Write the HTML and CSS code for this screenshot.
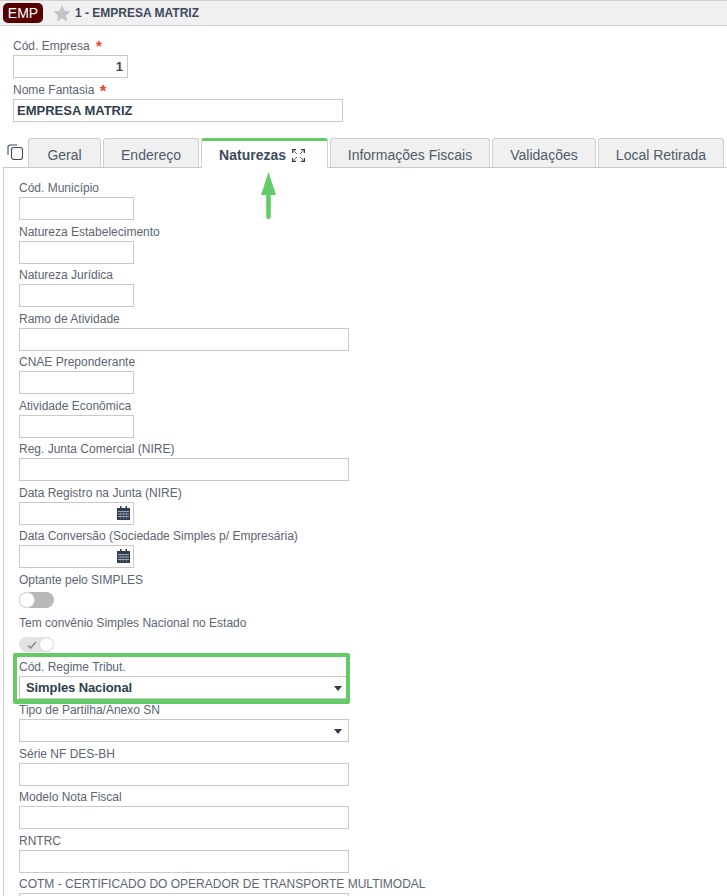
FILE: index.html
```html
<!DOCTYPE html>
<html lang="pt">
<head>
<meta charset="utf-8">
<title>Empresa</title>
<link rel="stylesheet" href="styles.css">
</head>
<body>
<header class="topbar">
  <span class="badge">EMP</span>
  <svg class="star" width="18" height="17" viewBox="0 0 20 18.500"><path d="M10 0l2.700 6.300 6.800.6-5.100 4.500 1.500 6.700L10 14.600l-5.900 3.500 1.500-6.700L.5 6.900l6.800-.6z" fill="#c4c4c8"/></svg>
  <span class="title">1 - EMPRESA MATRIZ</span>
</header>
<section class="head-form">
  <div class="field"><label class="lbl">Cód. Empresa <span class="req">*</span></label><div class="inp w115 num">1</div></div>
  <div class="field"><label class="lbl">Nome Fantasia <span class="req big">*</span></label><div class="inp w330 val">EMPRESA MATRIZ</div></div>
</section>
<nav class="tabs">
  <svg class="copy" width="16" height="16" viewBox="0 0 16 16" fill="none" stroke="#3d4a5c" stroke-width="1.100"><path d="M1 11V3a2 2 0 0 1 2-2h7"/><rect x="4.500" y="3.500" width="11" height="12" rx="2.500"/></svg>
  <a class="tab t1">Geral</a>
  <a class="tab t2">Endereço</a>
  <a class="tab active">Naturezas
    <svg class="expand" width="13" height="13" viewBox="0 0 13 13" fill="none" stroke="#2e3c50" stroke-width="1.300"><path d="M.6 4V.6h3.400M9 .6h3.400V4M12.400 9v3.400H9M4 12.400H.6V9"/><path class="expand-diag" d="M1.500 1.500l3.500 3.500M11.500 1.500L8 5M11.500 11.500L8 8M1.500 11.500L5 8"/></svg>
  </a>
  <a class="tab t4">Informações Fiscais</a>
  <a class="tab t5">Validações</a>
  <a class="tab t6">Local Retirada</a>
</nav>
<main class="panel">
  <svg class="arrow" width="15" height="47" viewBox="0 0 15 47"><path d="M7.500 0L15 23H9.800V44.700a2.300 2.300 0 0 1-4.600 0V23H0z" fill="#63cb66"/></svg>
  <div class="field"><label class="lbl">Cód. Município</label><div class="inp w115"></div></div>
  <div class="field"><label class="lbl">Natureza Estabelecimento</label><div class="inp w115"></div></div>
  <div class="field"><label class="lbl">Natureza Jurídica</label><div class="inp w115"></div></div>
  <div class="field"><label class="lbl">Ramo de Atividade</label><div class="inp w330"></div></div>
  <div class="field"><label class="lbl">CNAE Preponderante</label><div class="inp w115"></div></div>
  <div class="field"><label class="lbl">Atividade Econômica</label><div class="inp w115"></div></div>
  <div class="field"><label class="lbl">Reg. Junta Comercial (NIRE)</label><div class="inp w330"></div></div>
  <div class="field"><label class="lbl">Data Registro na Junta (NIRE)</label><div class="inp w115 date"><svg class="cal" width="13" height="14" viewBox="0 0 13 14"><path d="M3 0h1.500v2H8.500V0H10v2h3v12H0V2h3z" fill="#2f3d50"/><path d="M1 5.500h11M1 8h11M1 10.500h11" stroke="#c2c7cd" stroke-width=".8"/><path d="M3.500 5v8M6.500 5v8M9.500 5v8" stroke="#7f8994" stroke-width=".6"/></svg></div></div>
  <div class="field"><label class="lbl">Data Conversão (Sociedade Simples p/ Empresária)</label><div class="inp w115 date"><svg class="cal" width="13" height="14" viewBox="0 0 13 14"><path d="M3 0h1.500v2H8.500V0H10v2h3v12H0V2h3z" fill="#2f3d50"/><path d="M1 5.500h11M1 8h11M1 10.500h11" stroke="#c2c7cd" stroke-width=".8"/><path d="M3.500 5v8M6.500 5v8M9.500 5v8" stroke="#7f8994" stroke-width=".6"/></svg></div></div>
  <div class="field"><label class="lbl">Optante pelo SIMPLES</label><div class="toggle off"><span class="knob"></span></div></div>
  <div class="field"><label class="lbl">Tem convênio Simples Nacional no Estado</label><div class="toggle on"><svg class="check" width="10" height="8" viewBox="0 0 10 8" fill="none" stroke="#8b8b8b" stroke-width="1.600"><path d="M1 4.500l2.500 2.500L9 1"/></svg><span class="knob"></span></div></div>
  <div class="field"><label class="lbl">Cód. Regime Tribut.</label><div class="inp w330 val2">Simples Nacional<span class="caret"></span></div><span class="highlight"></span></div>
  <div class="field"><label class="lbl">Tipo de Partilha/Anexo SN</label><div class="inp w330"><span class="caret"></span></div></div>
  <div class="field"><label class="lbl">Série NF DES-BH</label><div class="inp w330"></div></div>
  <div class="field"><label class="lbl">Modelo Nota Fiscal</label><div class="inp w330"></div></div>
  <div class="field"><label class="lbl">RNTRC</label><div class="inp w330"></div></div>
  <div class="field"><label class="lbl">COTM - CERTIFICADO DO OPERADOR DE TRANSPORTE MULTIMODAL</label><div class="inp w330"></div></div>
</main>
</body>
</html>
```
FILE: styles.css
```css
* { box-sizing: border-box; }
html, body { margin: 0; padding: 0; height: 896px; overflow: hidden; background: #fff; }
body { font-family: "Liberation Sans", Arial, sans-serif; font-size: 12px; color: #5b6573; }
.topbar { height: 26px; background: #f0f0f0; border-top: 1px solid #d0d0d0; border-bottom: 1px solid #d0d0d0; display: flex; align-items: center; padding-left: 3px; }
.badge { width: 40px; height: 20px; background: #560000; color: #fff; border-radius: 5px; font-size: 14px; line-height: 20px; text-align: center; }
.star { margin-left: 10px; }
.title { margin-left: 4px; font-size: 12px; font-weight: bold; color: #3d4a5c; }
.head-form { padding: 13px 0 0 13px; height: 112px; }
.field { height: 43.500px; position: relative; }
.lbl { display: block; height: 16px; line-height: 14px; font-size: 12px; color: #5b6573; }
.req { color: #e8402f; font-size: 15px; font-weight: bold; margin-left: 3px; line-height: 10px; vertical-align: -1px; }
.req.big { font-size: 17px; margin-left: 2px; vertical-align: -3px; }
.inp { height: 23px; border: 1px solid #c9c9c9; background: #fff; position: relative; }
.w115 { width: 115px; }
.w330 { width: 330px; }
.num { text-align: right; padding-right: 4px; font-weight: bold; line-height: 21px; color: #3d4a5c; font-size: 13px; }
.val { padding-left: 3px; font-weight: bold; font-size: 13px; line-height: 21px; color: #2f3d50; }
.val2 { padding-left: 6px; font-weight: bold; font-size: 13px; letter-spacing: -.1px; line-height: 21px; color: #2f3d50; }
.tabs { height: 30px; display: flex; gap: 2px; align-items: flex-start; margin-left: 3px; padding-left: 25px; position: relative; border-bottom: 1px solid #c9c9c9; }
.tab { height: 29px; background: #f0f0f0; border: 1px solid #cfcfcf; border-bottom: 0; border-radius: 3px 3px 0 0; color: #4f5b6b; font-size: 14px; line-height: 32px; text-align: center; }
.t1 { width: 73px; }
.t2 { width: 96px; }
.t4 { width: 160px; }
.t5 { width: 104px; }
.t6 { width: 126px; }
.tab.active { width: 127px; height: 30px; padding-right: 5px; background: #fff; border-top: 3px solid #63cb66; font-weight: bold; color: #3d4a5c; line-height: 28px; }
.expand { vertical-align: -2px; margin-left: 2px; }
.expand-diag { stroke: #5f6b7a; stroke-width: 1; }
.copy { position: absolute; left: 4px; top: 6px; }
.panel { position: relative; margin-left: 3px; padding: 13px 0 0 15px; border-left: 1px solid #c9c9c9; height: 728px; }
.arrow { position: absolute; left: 257px; top: 4px; }
.date .cal { position: absolute; right: 3px; top: 3px; }
.toggle { width: 35px; height: 16px; margin-top: 3px; border-radius: 8px; position: relative; }
.toggle.off { background: #b8b8b8; }
.toggle.off .knob { left: 0; }
.toggle.on { background: #e2e2e2; height: 15px; margin-top: 5px; }
.toggle.on .knob { right: 0; width: 15px; height: 15px; }
.knob { position: absolute; top: 0; width: 16px; height: 16px; border-radius: 50%; background: #fff; border: 1px solid #d8d8d8; }
.check { position: absolute; left: 8px; top: 4px; }
.caret { position: absolute; right: 6px; top: 9px; border-left: 4.500px solid transparent; border-right: 4.500px solid transparent; border-top: 5px solid #2f3d50; }
.highlight { position: absolute; left: -6px; top: -7px; width: 337px; height: 51px; border: 4px solid #63cb66; border-bottom-width: 5px; border-radius: 2px; pointer-events: none; }
```
